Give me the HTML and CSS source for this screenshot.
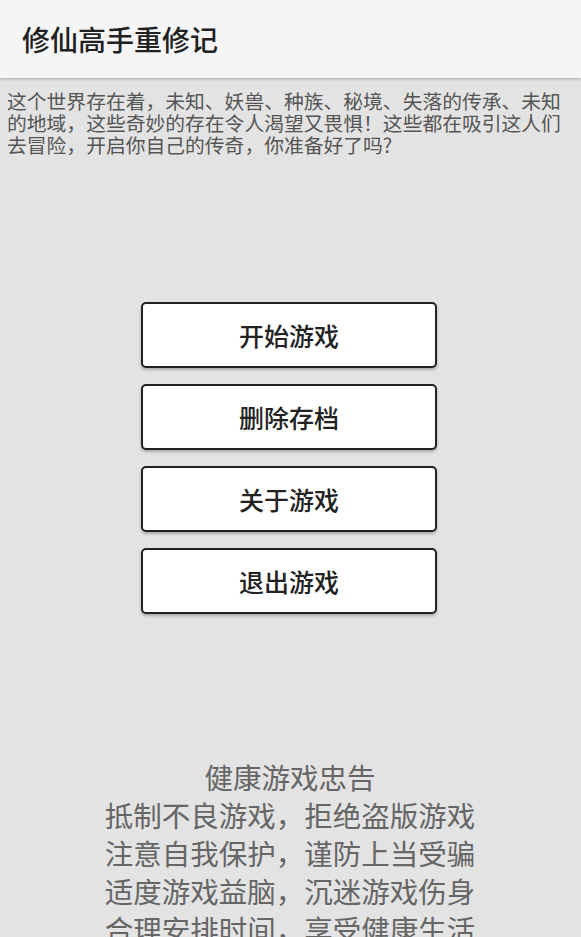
FILE: index.html
```html
<!DOCTYPE html>
<html lang="zh-CN">
<head>
<meta charset="utf-8">
<title>修仙高手重修记</title>
<link rel="stylesheet" href="styles.css">
</head>
<body>
<header class="appbar"><h1 class="title">修仙高手重修记</h1></header>
<p class="intro">这个世界存在着，未知、妖兽、种族、秘境、失落的传承、未知的地域，这些奇妙的存在令人渴望又畏惧！这些都在吸引这人们去冒险，开启你自己的传奇，你准备好了吗?</p>
<div class="menu">
  <button class="btn">开始游戏</button>
  <button class="btn">删除存档</button>
  <button class="btn">关于游戏</button>
  <button class="btn">退出游戏</button>
</div>
<div class="advice">
  <div>健康游戏忠告</div>
  <div>抵制不良游戏，拒绝盗版游戏</div>
  <div>注意自我保护，谨防上当受骗</div>
  <div>适度游戏益脑，沉迷游戏伤身</div>
  <div>合理安排时间，享受健康生活</div>
</div>
</body>
</html>
```
FILE: styles.css
```css
html, body {
  margin: 0;
  padding: 0;
  height: 100%;
  overflow: hidden;
}
body {
  background: #e3e3e3;
  font-family: "Noto Sans CJK SC", sans-serif;
}
.appbar {
  height: 78px;
  background: #f5f5f5;
  box-shadow: 0 1px 3px rgba(0,0,0,0.25);
  display: flex;
  align-items: center;
  padding: 0 22px;
  position: relative;
}
.title {
  margin: 0;
  font-size: 28px;
  font-weight: 500;
  color: #212121;
  line-height: 1;
}
.intro {
  margin: 12px 0 0;
  padding: 0 7px;
  font-size: 19.8px;
  line-height: 22px;
  color: #555;
}
.menu {
  margin-top: 146px;
  padding-right: 3px;
  display: flex;
  flex-direction: column;
  align-items: center;
  gap: 16px;
}
.btn {
  width: 296px;
  height: 66px;
  background: #fff;
  border: 2px solid #222;
  border-radius: 5px;
  box-shadow: 0 2px 3px rgba(0,0,0,0.25);
  font-family: "Noto Sans CJK SC", sans-serif;
  font-size: 25px;
  font-weight: 500;
  color: #222;
  padding: 0;
}
.advice {
  margin-top: 144px;
  padding-right: 1px;
  text-align: center;
  font-size: 28.5px;
  line-height: 38px;
  color: #666;
}
```
